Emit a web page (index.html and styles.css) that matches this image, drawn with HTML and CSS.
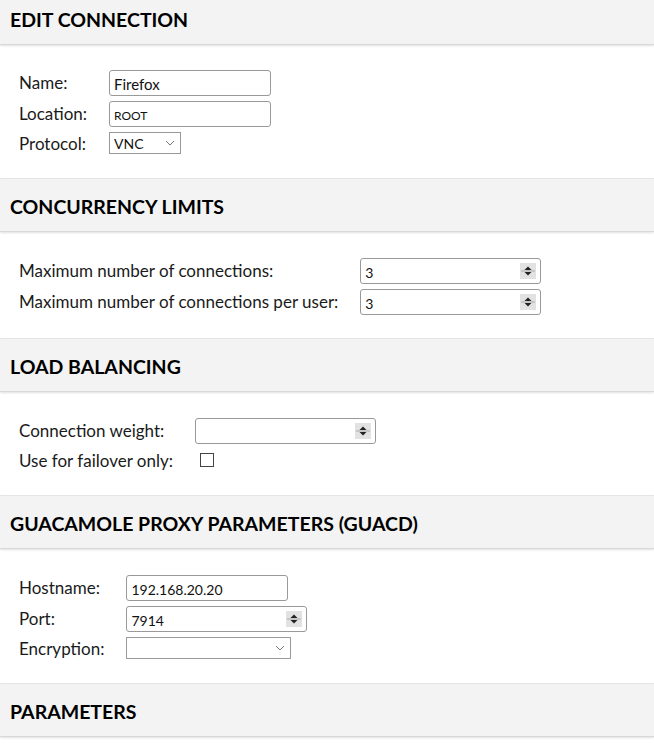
FILE: index.html
```html
<!DOCTYPE html>
<html lang="en">

<head>
  <meta charset="UTF-8">
  <title>Edit Connection</title>
  <link rel="stylesheet" href="styles.css">
</head>

<body>
  <div class="page">

    <div class="section">
      <h2 class="section-header">Edit Connection</h2>
      <div class="section-body">
        <table class="fields">
          <tr>
            <th>Name:</th>
            <td><input type="text" class="text-field name-text" value="Firefox"></td>
          </tr>
          <tr>
            <th>Location:</th>
            <td><input type="text" class="text-field small-text" value="ROOT"></td>
          </tr>
          <tr>
            <th>Protocol:</th>
            <td>
              <div class="select-wrap protocol">
                <select class="select-field"><option>VNC</option></select>
                <svg class="chevron" width="10" height="6" viewBox="0 0 10 6"><path d="M1 1l4 4 4-4" fill="none" stroke="#777" stroke-width="1"/></svg>
              </div>
            </td>
          </tr>
        </table>
      </div>
    </div>

    <div class="section">
      <h2 class="section-header">Concurrency Limits</h2>
      <div class="section-body">
        <table class="fields">
          <tr>
            <th>Maximum number of connections:</th>
            <td>
              <div class="number-wrap">
                <input type="text" class="number-field" value="3">
                <span class="spinner"><svg width="16" height="16" viewBox="0 0 16 16"><path d="M8 3.5l3.5 3.5h-7z" fill="#222"/><path d="M8 12.5l3.5-3.5h-7z" fill="#222"/><path d="M1 8h14" stroke="#aaa"/></svg></span>
              </div>
            </td>
          </tr>
          <tr>
            <th>Maximum number of connections per user:</th>
            <td>
              <div class="number-wrap">
                <input type="text" class="number-field" value="3">
                <span class="spinner"><svg width="16" height="16" viewBox="0 0 16 16"><path d="M8 3.5l3.5 3.5h-7z" fill="#222"/><path d="M8 12.5l3.5-3.5h-7z" fill="#222"/><path d="M1 8h14" stroke="#aaa"/></svg></span>
              </div>
            </td>
          </tr>
        </table>
      </div>
    </div>

    <div class="section">
      <h2 class="section-header">Load Balancing</h2>
      <div class="section-body">
        <table class="fields">
          <tr>
            <th>Connection weight:</th>
            <td>
              <div class="number-wrap">
                <input type="text" class="number-field" value="">
                <span class="spinner"><svg width="16" height="16" viewBox="0 0 16 16"><path d="M8 3.5l3.5 3.5h-7z" fill="#222"/><path d="M8 12.5l3.5-3.5h-7z" fill="#222"/><path d="M1 8h14" stroke="#aaa"/></svg></span>
              </div>
            </td>
          </tr>
          <tr>
            <th>Use for failover only:</th>
            <td><input type="checkbox" class="check-field"></td>
          </tr>
        </table>
      </div>
    </div>

    <div class="section">
      <h2 class="section-header">Guacamole Proxy Parameters (guacd)</h2>
      <div class="section-body">
        <table class="fields">
          <tr>
            <th>Hostname:</th>
            <td><input type="text" class="text-field" value="192.168.20.20"></td>
          </tr>
          <tr>
            <th>Port:</th>
            <td>
              <div class="number-wrap">
                <input type="text" class="number-field" value="7914">
                <span class="spinner"><svg width="16" height="16" viewBox="0 0 16 16"><path d="M8 3.5l3.5 3.5h-7z" fill="#222"/><path d="M8 12.5l3.5-3.5h-7z" fill="#222"/><path d="M1 8h14" stroke="#aaa"/></svg></span>
              </div>
            </td>
          </tr>
          <tr>
            <th>Encryption:</th>
            <td>
              <div class="select-wrap encryption">
                <select class="select-field"><option></option></select>
                <svg class="chevron" width="10" height="6" viewBox="0 0 10 6"><path d="M1 1l4 4 4-4" fill="none" stroke="#777" stroke-width="1"/></svg>
              </div>
            </td>
          </tr>
        </table>
      </div>
    </div>

    <div class="section">
      <h2 class="section-header">Parameters</h2>
      <div class="section-body"></div>
    </div>

  </div>
</body>

</html>
```

FILE: styles.css
```css
body {
  margin: 0;
  font-family: Lato, "Open Sans", sans-serif;
  font-size: 17px;
  color: #1a1a1a;
  background: #fff;
  overflow: hidden;
}

.page {
  margin-top: -8px;
}

.section-header {
  margin: 0;
  height: 52px;
  line-height: 55px;
  padding: 0 10px;
  font-size: 19.5px;
  font-weight: bold;
  text-transform: uppercase;
  color: #000;
  background: #f3f3f3;
  border-bottom: 1px solid #d8d8d8;
  box-shadow: 0 1px 2px rgba(0, 0, 0, 0.12);
}

.section-body {
  padding: 23px 19px 21px 19px;
  border-bottom: 1px solid #e6e6e6;
}

.section:first-child .section-body {
  padding-top: 22px;
}

.fields {
  border-collapse: collapse;
}

.fields th {
  text-align: left;
  font-weight: normal;
  padding: 2.5px 22px 2.5px 0;
  line-height: 23px;
  vertical-align: middle;
  white-space: nowrap;
}

.fields td {
  padding: 2.5px 0;
  vertical-align: middle;
}

.text-field,
.number-field {
  display: block;
  box-sizing: border-box;
  height: 26px;
  width: 162px;
  margin: 0;
  padding: 3px 4px 0;
  font-family: Lato, "Open Sans", sans-serif;
  font-size: 14px;
  color: #111;
  border: 1px solid #999;
  border-radius: 3px;
  background: #fff;
}

.name-text {
  font-size: 15px;
}

.small-text {
  font-size: 12px;
}

.number-wrap {
  position: relative;
  width: 181px;
}

.number-field {
  width: 100%;
  padding-right: 26px;
}

.spinner {
  position: absolute;
  right: 5px;
  top: 5px;
  width: 16px;
  height: 16px;
  background: #e2e2e2;
}

.spinner svg {
  display: block;
}

.select-wrap {
  position: relative;
}

.protocol {
  width: 72px;
}

.encryption {
  width: 165px;
}

.select-field {
  display: block;
  box-sizing: border-box;
  width: 100%;
  height: 22px;
  margin: 0;
  padding: 1px 4px 0;
  font-family: Lato, "Open Sans", sans-serif;
  font-size: 14px;
  color: #111;
  border: 1px solid #999;
  border-radius: 0;
  background: #fff;
  appearance: none;
  -webkit-appearance: none;
}

.chevron {
  position: absolute;
  right: 6px;
  top: 8px;
  pointer-events: none;
}

.check-field {
  appearance: none;
  -webkit-appearance: none;
  display: block;
  width: 14px;
  height: 14px;
  margin: 0 0 0 5px;
  border: 1px solid #444;
  background: #fff;
}
```
